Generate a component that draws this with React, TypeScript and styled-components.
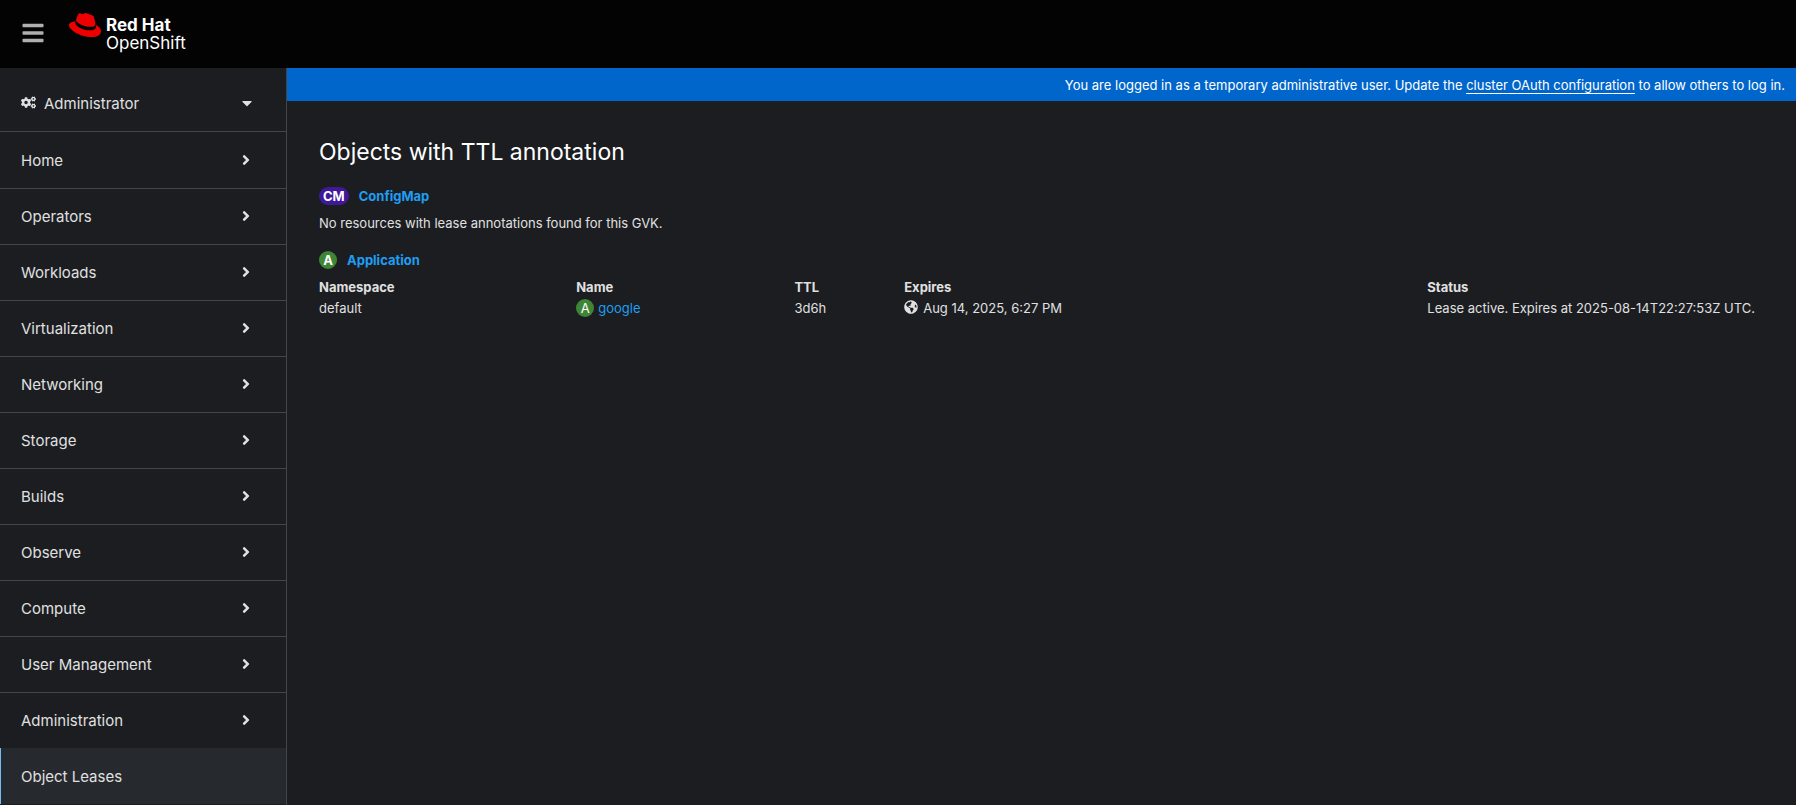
import React from 'react';
import styled, { createGlobalStyle } from 'styled-components';
import { FaAngleRight, FaBars, FaCaretDown, FaCogs, FaGlobeAmericas, FaRedhat } from 'react-icons/fa';

const color = {
  masthead: '#030303',
  background: '#1b1d21',
  current: '#26292d',
  currentAccent: '#73bcf7',
  border: '#444548',
  text: '#e0e0e0',
  white: '#ffffff',
  link: '#1f9ef2',
  banner: '#0066cc',
};

const GlobalStyle = createGlobalStyle`
  *, *::before, *::after { box-sizing: border-box; }
  body {
    margin: 0;
    background: ${color.background};
    color: ${color.text};
    font-family: Inter, "Liberation Sans", sans-serif;
    font-size: 13px;
    line-height: 21px;
  }
  button { font: inherit; color: inherit; border: 0; background: none; cursor: pointer; }
  a { color: ${color.link}; text-decoration: none; }
  a:hover { text-decoration: underline; }
`;

const Page = styled.div`
  display: flex;
  flex-direction: column;
  min-height: 100vh;
`;

const Masthead = styled.header`
  display: flex;
  align-items: center;
  height: 68px;
  padding-left: 21px;
  background: ${color.masthead};
`;

const MenuButton = styled.button`
  display: flex;
  padding: 0 0 2px;
  margin-right: 24px;
  color: #b0b0b0;
  font-size: 24px;
`;

const Brand = styled.a`
  display: flex;
  gap: 5px;
  padding-bottom: 8px;
  color: ${color.white};
  &:hover { text-decoration: none; }
`;

const Hat = styled(FaRedhat)`
  width: 32px;
  height: 32px;
  color: #ee0000;
`;

const BrandName = styled.span`
  display: flex;
  flex-direction: column;
  padding-top: 7px;
  font-size: 17px;
  line-height: 18px;
`;

const Body = styled.div`
  display: flex;
  flex: 1;
`;

const Sidebar = styled.aside`
  flex: none;
  width: 287px;
  border-right: 1px solid ${color.border};
  font-size: 15px;
`;

const PerspectiveButton = styled.button`
  display: flex;
  align-items: center;
  width: 100%;
  height: 64px;
  padding: 8px 31px 0 21px;
  border-bottom: 1px solid ${color.border};
  text-align: left;
`;

const PerspectiveIcon = styled(FaCogs)`
  margin-right: 8px;
  margin-bottom: 2px;
  font-size: 15px;
`;

const Grow = styled.span`
  flex: 1;
`;

const Caret = styled(FaCaretDown)`
  margin-bottom: 2px;
  font-size: 16px;
`;

const NavList = styled.ul`
  margin: 0;
  padding: 1px 0 0;
  list-style: none;
`;

const NavItem = styled.li`
  border-bottom: 1px solid ${color.border};
  &:nth-last-child(-n + 2) { border-bottom-color: transparent; }
`;

const NavButton = styled.button`
  display: flex;
  align-items: center;
  width: 100%;
  height: 55px;
  padding: 0 32px 0 21px;
  text-align: left;
`;

const NavLink = styled.a`
  display: flex;
  align-items: center;
  height: 56px;
  margin-top: -1px;
  padding-left: 20px;
  border-left: 1px solid ${color.currentAccent};
  background: ${color.current};
  color: inherit;
`;

const Chevron = styled(FaAngleRight)`
  margin-bottom: 2px;
  font-size: 16px;
`;

const Main = styled.main`
  flex: 1;
  min-width: 0;
`;

const Banner = styled.div`
  padding: 7px 11px 5px;
  background: ${color.banner};
  color: ${color.white};
  text-align: right;
`;

const BannerLink = styled.a`
  color: inherit;
  text-decoration: underline;
  text-underline-offset: 3px;
`;

const Content = styled.section`
  padding: 35px 32px 32px;
`;

const Title = styled.h1`
  margin: 0 0 18px;
  color: ${color.white};
  font-size: 23px;
  font-weight: 400;
  line-height: 32px;
`;

const Group = styled.section`
  margin-bottom: 16px;
`;

const GroupTitle = styled.h2`
  display: flex;
  align-items: center;
  gap: 10px;
  margin: 0 0 6px;
  font-size: 13px;
  font-weight: 700;
  line-height: 21px;
`;

const Badge = styled.span<{ $tone: string }>`
  display: inline-flex;
  align-items: center;
  justify-content: center;
  min-width: 18px;
  height: 18px;
  margin-bottom: 2px;
  padding: 0 4px;
  border-radius: 9px;
  background: ${(p) => p.$tone};
  color: ${color.white};
  font-size: 13px;
  font-weight: inherit;
  line-height: 18px;
`;

const Note = styled.p`
  margin: 0;
`;

const Table = styled.table`
  width: 100%;
  table-layout: fixed;
  border-collapse: collapse;
`;

const Column = styled.th<{ $width: string }>`
  width: ${(p) => p.$width};
  padding: 0;
  font-weight: 700;
  text-align: left;
`;

const Cell = styled.td`
  padding: 0;
`;

const Inline = styled.span<{ $gap: number }>`
  display: flex;
  align-items: center;
  gap: ${(p) => p.$gap}px;
`;

const Globe = styled(FaGlobeAmericas)`
  font-size: 14px;
  margin-bottom: 3px;
`;

const purple = '#40199a';
const green = '#3e8635';

const sections = [
  'Home',
  'Operators',
  'Workloads',
  'Virtualization',
  'Networking',
  'Storage',
  'Builds',
  'Observe',
  'Compute',
  'User Management',
  'Administration',
];

const columns = [
  { label: 'Namespace', width: '17.8%' },
  { label: 'Name', width: '15.1%' },
  { label: 'TTL', width: '7.6%' },
  { label: 'Expires', width: '36.2%' },
  { label: 'Status', width: '23.3%' },
];

const leases = [
  {
    namespace: 'default',
    name: 'google',
    ttl: '3d6h',
    expires: 'Aug 14, 2025, 6:27 PM',
    status: 'Lease active. Expires at 2025-08-14T22:27:53Z UTC.',
  },
];

export default function App() {
  return (
    <Page>
      <GlobalStyle />
      <Masthead>
        <MenuButton type="button" aria-label="Global navigation">
          <FaBars />
        </MenuButton>
        <Brand href="#">
          <Hat aria-hidden />
          <BrandName>
            <b>Red Hat</b>
            <span>OpenShift</span>
          </BrandName>
        </Brand>
      </Masthead>
      <Body>
        <Sidebar>
          <PerspectiveButton type="button" aria-haspopup="listbox">
            <PerspectiveIcon aria-hidden />
            <Grow>Administrator</Grow>
            <Caret aria-hidden />
          </PerspectiveButton>
          <nav>
            <NavList>
              {sections.map((label) => (
                <NavItem key={label}>
                  <NavButton type="button" aria-expanded={false}>
                    <Grow>{label}</Grow>
                    <Chevron aria-hidden />
                  </NavButton>
                </NavItem>
              ))}
              <NavItem>
                <NavLink href="#" aria-current="page">Object Leases</NavLink>
              </NavItem>
            </NavList>
          </nav>
        </Sidebar>
        <Main>
          <Banner>
            You are logged in as a temporary administrative user. Update the{' '}
            <BannerLink href="#">cluster OAuth configuration</BannerLink> to allow others to log in.
          </Banner>
          <Content>
            <Title>Objects with TTL annotation</Title>
            <Group>
              <GroupTitle>
                <Badge $tone={purple}>CM</Badge>
                <a href="#">ConfigMap</a>
              </GroupTitle>
              <Note>No resources with lease annotations found for this GVK.</Note>
            </Group>
            <Group>
              <GroupTitle>
                <Badge $tone={green}>A</Badge>
                <a href="#">Application</a>
              </GroupTitle>
              <Table>
                <thead>
                  <tr>
                    {columns.map((c) => (
                      <Column key={c.label} scope="col" $width={c.width}>{c.label}</Column>
                    ))}
                  </tr>
                </thead>
                <tbody>
                  {leases.map((lease) => (
                    <tr key={lease.name}>
                      <Cell>{lease.namespace}</Cell>
                      <Cell>
                        <Inline $gap={4}>
                          <Badge $tone={green}>A</Badge>
                          <a href="#">{lease.name}</a>
                        </Inline>
                      </Cell>
                      <Cell>{lease.ttl}</Cell>
                      <Cell>
                        <Inline $gap={5}>
                          <Globe aria-hidden />
                          {lease.expires}
                        </Inline>
                      </Cell>
                      <Cell>{lease.status}</Cell>
                    </tr>
                  ))}
                </tbody>
              </Table>
            </Group>
          </Content>
        </Main>
      </Body>
    </Page>
  );
}
